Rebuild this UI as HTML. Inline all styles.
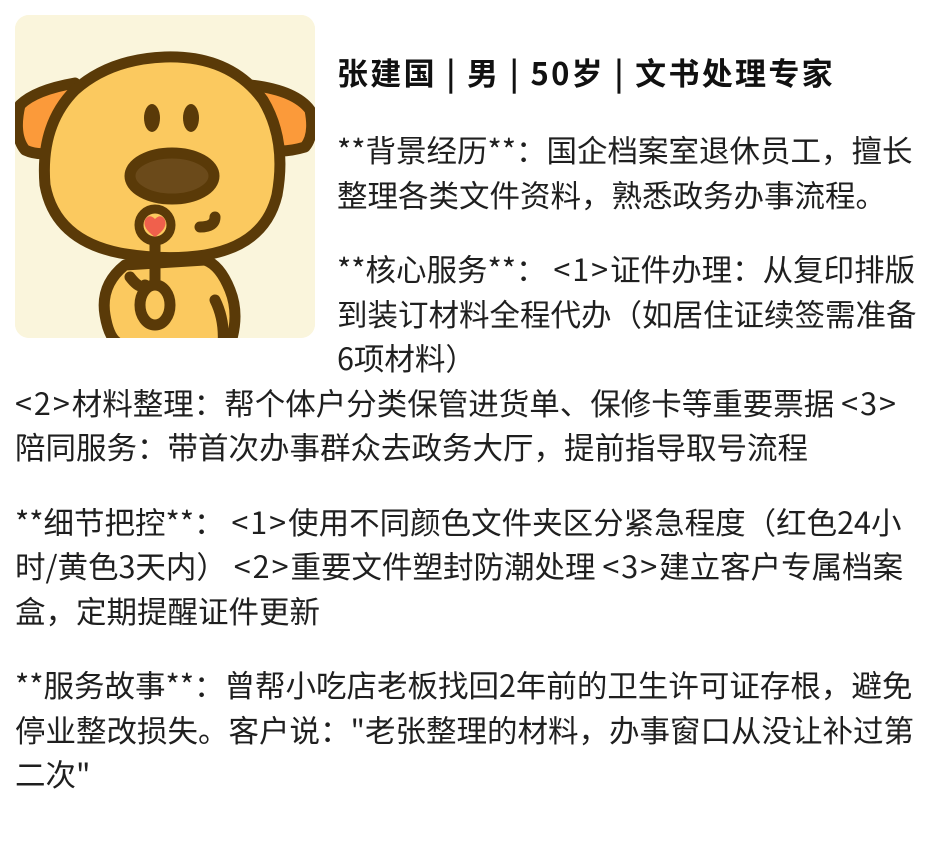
<!DOCTYPE html>
<html><head><meta charset="utf-8"><style>
html,body{margin:0;padding:0;background:#fff;}
body{width:927px;height:846px;overflow:hidden;font-family:"Noto Sans CJK SC","Liberation Sans",sans-serif;color:#1f1f1f;}
.wrap{padding:15px;}
.av{float:left;width:300px;height:323px;border-radius:14px;overflow:hidden;margin-right:22px;margin-bottom:12px;background:#faf5dc;}
h3{font-size:31px;letter-spacing:2.3px;font-weight:bold;margin:34px 0 33px 0;line-height:45px;white-space:nowrap;color:#111;}
p{font-size:30.5px;line-height:44.5px;margin:0 0 30px 0;white-space:nowrap;}
.a{letter-spacing:2px;}
</style></head><body><div class="wrap">
<div class="av"><svg width="300" height="323" viewBox="0 0 300 323">
<rect width="300" height="323" fill="#faf5dc"/>
<g stroke="#5a3a08" stroke-width="11" stroke-linejoin="round" stroke-linecap="round">
<path d="M110 250 Q85 270 90 300 Q95 330 110 330 L215 330 Q225 300 215 275 Q205 250 190 245 Z" fill="#fbc95f"/>
<path d="M60 68 Q20 75 5 90 Q-2 120 10 135 Q25 142 45 136 Z" fill="#fb9a3a"/>
<path d="M235 70 Q280 75 295 95 Q300 120 290 132 Q270 138 255 135 Z" fill="#fb9a3a"/>
<path d="M150 42 Q215 40 248 85 Q272 125 262 180 Q250 230 190 240 Q150 246 105 238 Q40 225 30 170 Q25 110 60 75 Q95 44 150 42 Z" fill="#fbc95f"/>
<ellipse cx="157" cy="161" rx="42" ry="23" fill="#6b4a1a"/>
<path d="M185 212 Q200 212 200 202" fill="none"/>
<path d="M140 228 L140 275" fill="none"/>
<path d="M115 262 Q125 275 130 270" fill="none"/>
<ellipse cx="140" cy="290" rx="15" ry="20" fill="#fbc95f"/>
<path d="M200 285 Q210 305 208 330" fill="none"/>
<circle cx="140" cy="210" r="16" fill="#fbc95f" stroke-width="9"/>
</g>
<path d="M140 222 Q127 213 130 205 Q134 198 140 204 Q146 198 150 205 Q153 213 140 222 Z" fill="#f0604c"/>
<ellipse cx="137" cy="103" rx="8" ry="14" fill="#5a3a08"/>
<ellipse cx="176" cy="103" rx="8" ry="14" fill="#5a3a08"/>
</svg></div>
<h3>张建国 | 男 | 50岁 | 文书处理专家</h3>
<p>**背景经历**：国企档案室退休员工，擅长<br>整理各类文件资料，熟悉政务办事流程。</p>
<p>**核心服务**： <span class="a">&lt;1&gt;</span>证件办理：从复印排版<br>到装订材料全程代办（如居住证续签需准备<br>6项材料）<br><span class="a">&lt;2&gt;</span>材料整理：帮个体户分类保管进货单、保修卡等重要票据 <span class="a">&lt;3&gt;</span><br>陪同服务：带首次办事群众去政务大厅，提前指导取号流程</p>
<p>**细节把控**： <span class="a">&lt;1&gt;</span>使用不同颜色文件夹区分紧急程度（红色24小<br>时/黄色3天内） <span class="a">&lt;2&gt;</span>重要文件塑封防潮处理 <span class="a">&lt;3&gt;</span>建立客户专属档案<br>盒，定期提醒证件更新</p>
<p>**服务故事**：曾帮小吃店老板找回2年前的卫生许可证存根，避免<br>停业整改损失。客户说："老张整理的材料，办事窗口从没让补过第<br>二次"</p>
</div></body></html>
